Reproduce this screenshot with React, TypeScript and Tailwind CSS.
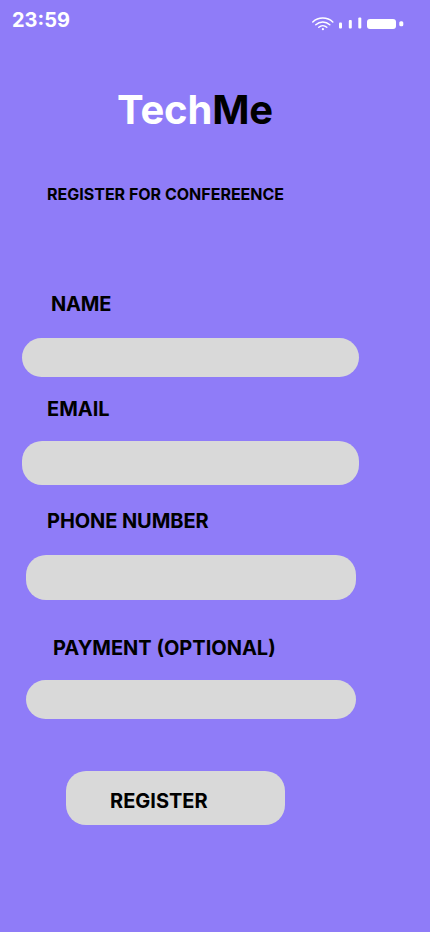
import React from "react";

type Field = { id: string; label: string; labelClass: string; inputClass: string };

const fields: Field[] = [
  { id: "name", label: "NAME", labelClass: "ml-[51px] mt-[87px] tracking-[-0.2px]", inputClass: "ml-[22px] mt-[22px] h-[39px] w-[337px]" },
  { id: "email", label: "EMAIL", labelClass: "ml-[47px] mt-5", inputClass: "ml-[22px] mt-5 h-11 w-[337px]" },
  { id: "phone", label: "PHONE NUMBER", labelClass: "ml-[47px] mt-6 tracking-[-0.08px]", inputClass: "ml-[26px] mt-[22px] h-[45px] w-[330px]" },
  { id: "payment", label: "PAYMENT (OPTIONAL)", labelClass: "ml-[53px] mt-9", inputClass: "ml-[26px] mt-5 h-[39px] w-[330px]" },
];

function StatusIcons() {
  return (
    <svg className="mt-4 h-4 w-[96px]" viewBox="0 0 96 16" fill="none">
      <g stroke="white" strokeWidth="1.5" strokeLinecap="round">
        <path d="M.8 6 C6.3 .8 15.3 .8 20.8 6" />
        <path d="M3.8 8.7 C7.8 5 13.8 5 17.8 8.7" />
        <path d="M6.8 11.2 C9.1 9.2 12.5 9.2 14.8 11.2" />
      </g>
      <circle cx="10.9" cy="13.2" r="1.1" fill="white" />
      <g fill="white">
        <rect x="27" y="6.5" width="3" height="6" rx="1" />
        <rect x="36.8" y="4" width="3" height="8.5" rx="1" />
        <rect x="46.3" y="1.5" width="3" height="11" rx="1" />
        <rect x="55" y="3" width="29" height="10" rx="3" />
        <rect x="87.3" y="5.3" width="4" height="5" rx="1.5" />
      </g>
    </svg>
  );
}

export default function App() {
  return (
    <main className="flex h-[932px] w-[430px] flex-col overflow-hidden bg-[#8f7cf8] font-['Inter',sans-serif] font-bold text-black">
      <header className="flex h-10 justify-between pl-3 pr-[22px] text-white">
        <span className="mt-2 text-xl leading-6">23:59</span>
        <StatusIcons />
      </header>
      <h1 className="ml-[117px] mt-[46px] text-[40px] leading-12 tracking-[-0.15px]"><span className="text-white">Tech</span>Me</h1>
      <h2 className="ml-[47px] mt-[51px] whitespace-nowrap text-base leading-[19px]">REGISTER FOR CONFEREENCE</h2>
      <form className="mt-px flex flex-col items-start" onSubmit={(e) => e.preventDefault()}>
        {fields.map((f) => (
          <React.Fragment key={f.id}>
            <label htmlFor={f.id} className={`text-xl leading-6 ${f.labelClass}`}>{f.label}</label>
            <input id={f.id} className={`rounded-[20px] bg-[#d9d9d9] px-6 outline-none ${f.inputClass}`} />
          </React.Fragment>
        ))}
        <button className="ml-[66px] mt-[52px] h-[54px] w-[219px] rounded-[20px] bg-[#d9d9d9] pl-11 pt-1.5 text-left text-xl leading-6">REGISTER</button>
      </form>
    </main>
  );
}
